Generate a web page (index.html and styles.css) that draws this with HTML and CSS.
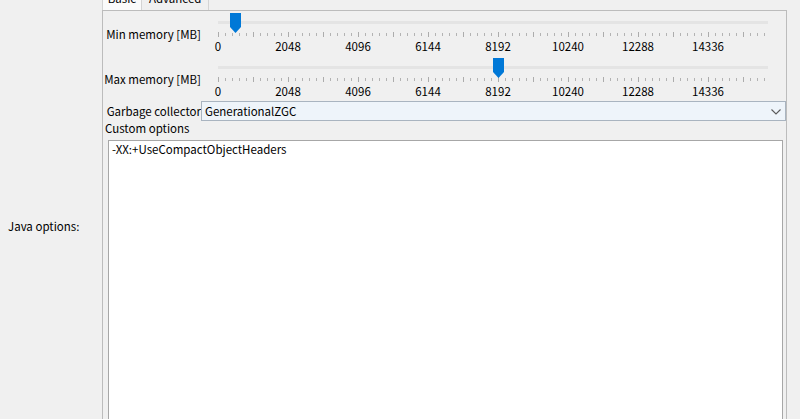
FILE: index.html
```html
<!DOCTYPE html>
<html>
<head>
<meta charset="utf-8">
<link rel="stylesheet" href="styles.css">
</head>
<body>
<div class="page">
  <div class="side"><span class="side-label">Java options:</span></div>
  <div class="tabs">
    <div class="tabstrip">
      <span class="tab tab-active">Basic</span>
      <span class="tab">Advanced</span>
    </div>
    <div class="tabpage">
      <div class="slider-row">
        <span class="row-label">Min memory [MB]</span>
        <div class="slider">
          <div class="track"><div class="thumb" style="left:12px"><svg width="11" height="20" viewBox="0 0 11 20"><path d="M0 0H11V14L5.5 20L0 14Z" fill="#0078d7"/></svg></div></div>
          <svg class="ticks" width="550" height="6">
            <defs>
              <pattern id="minorA" width="7" height="6" patternUnits="userSpaceOnUse"><rect x="0" y="1" width="1" height="3" fill="#b3b3b3"/></pattern>
              <pattern id="majorA" width="35" height="6" patternUnits="userSpaceOnUse"><rect x="0" y="0" width="1" height="5" fill="#acacac"/></pattern>
            </defs>
            <rect width="550" height="6" fill="url(#minorA)"/>
            <rect width="550" height="6" fill="url(#majorA)"/>
          </svg>
          <div class="scale"><span>0</span><span>2048</span><span>4096</span><span>6144</span><span>8192</span><span>10240</span><span>12288</span><span>14336</span></div>
        </div>
      </div>
      <div class="slider-row">
        <span class="row-label">Max memory [MB]</span>
        <div class="slider">
          <div class="track"><div class="thumb" style="left:274.5px"><svg width="11" height="20" viewBox="0 0 11 20"><path d="M0 0H11V14L5.5 20L0 14Z" fill="#0078d7"/></svg></div></div>
          <svg class="ticks" width="550" height="6">
            <defs>
              <pattern id="minorB" width="7" height="6" patternUnits="userSpaceOnUse"><rect x="0" y="1" width="1" height="3" fill="#b3b3b3"/></pattern>
              <pattern id="majorB" width="35" height="6" patternUnits="userSpaceOnUse"><rect x="0" y="0" width="1" height="5" fill="#acacac"/></pattern>
            </defs>
            <rect width="550" height="6" fill="url(#minorB)"/>
            <rect width="550" height="6" fill="url(#majorB)"/>
          </svg>
          <div class="scale"><span>0</span><span>2048</span><span>4096</span><span>6144</span><span>8192</span><span>10240</span><span>12288</span><span>14336</span></div>
        </div>
      </div>
      <div class="combo-row">
        <span class="row-label combo-label">Garbage collector</span>
        <div class="combo">
          <span>GenerationalZGC</span>
          <svg class="chevron" width="10" height="6" viewBox="0 0 10 6"><path d="M0.5 0.5L5 5L9.5 0.5" fill="none" stroke="#5a5a5a" stroke-width="1.1"/></svg>
        </div>
      </div>
      <div class="custom-label">Custom options</div>
      <textarea class="custom-text" spellcheck="false">-XX:+UseCompactObjectHeaders</textarea>
    </div>
  </div>
</div>
</body>
</html>
```
FILE: styles.css
```css
html, body {
  margin: 0;
  padding: 0;
  background: #f0f0f0;
  overflow: hidden;
}
body {
  font-family: "Noto Sans CJK JP", "Noto Sans", sans-serif;
  font-size: 11.5px;
  color: #000;
}
.page {
  display: flex;
  height: 419px;
  overflow: hidden;
}
.side {
  width: 102px;
  flex: none;
  padding-top: 218px;
  padding-left: 8px;
  box-sizing: border-box;
  line-height: 16px;
}
.tabs {
  width: 685px;
  flex: none;
  margin-top: -10px;
}
.tabstrip {
  display: flex;
  height: 20px;
  align-items: flex-end;
}
.tab {
  line-height: 16px;
  height: 20px;
  box-sizing: border-box;
  padding: 0 7px 5px;
  border-right: 1px solid #d4d4d4;
}
.tab-active {
  background: #fbfbfb;
  width: 40px;
  text-align: center;
  padding: 0 0 5px;
  border-left: 1px solid #d4d4d4;
}
.tabpage {
  border: 1px solid #bcbcbc;
  height: 520px;
  box-sizing: border-box;
  background: #f0f0f0;
}
.slider-row {
  display: flex;
  height: 45px;
}
.row-label {
  width: 98px;
  flex: none;
  text-align: right;
  white-space: nowrap;
  padding-top: 15px;
  line-height: 16px;
  box-sizing: border-box;
}
.slider {
  padding-left: 17px;
  padding-top: 10px;
}
.track {
  position: relative;
  width: 550px;
  height: 3px;
  background: #e4e4e4;
}
.thumb {
  position: absolute;
  top: -8px;
  width: 11px;
  height: 20px;
}
.thumb svg {
  display: block;
}
.ticks {
  display: block;
  margin-top: 8px;
}
.scale {
  display: grid;
  grid-template-columns: repeat(8, 70px);
  margin-left: -35px;
  margin-top: 2px;
  line-height: 13px;
  text-align: center;
}
.combo-row {
  display: flex;
  height: 20px;
}
.combo-label {
  padding-top: 0;
  line-height: 20px;
}
.combo {
  flex: 1;
  height: 20px;
  box-sizing: border-box;
  border: 1px solid #a9b4c0;
  background: #eef4fa;
  display: flex;
  align-items: center;
  justify-content: space-between;
  padding: 0 4px 0 3px;
  line-height: 18px;
}
.chevron {
  display: block;
  margin-top: 2px;
}
.custom-label {
  line-height: 15px;
  padding-left: 2px;
}
.custom-text {
  display: block;
  margin: 4px 0 0 5px;
  width: 675px;
  height: 320px;
  box-sizing: border-box;
  border: 1px solid #a7a7a7;
  background: #fff;
  font-family: "Noto Sans CJK JP", "Noto Sans", sans-serif;
  font-size: 11.5px;
  line-height: 15px;
  padding: 1px 3px 0;
  resize: none;
  outline: none;
  color: #000;
}
```
